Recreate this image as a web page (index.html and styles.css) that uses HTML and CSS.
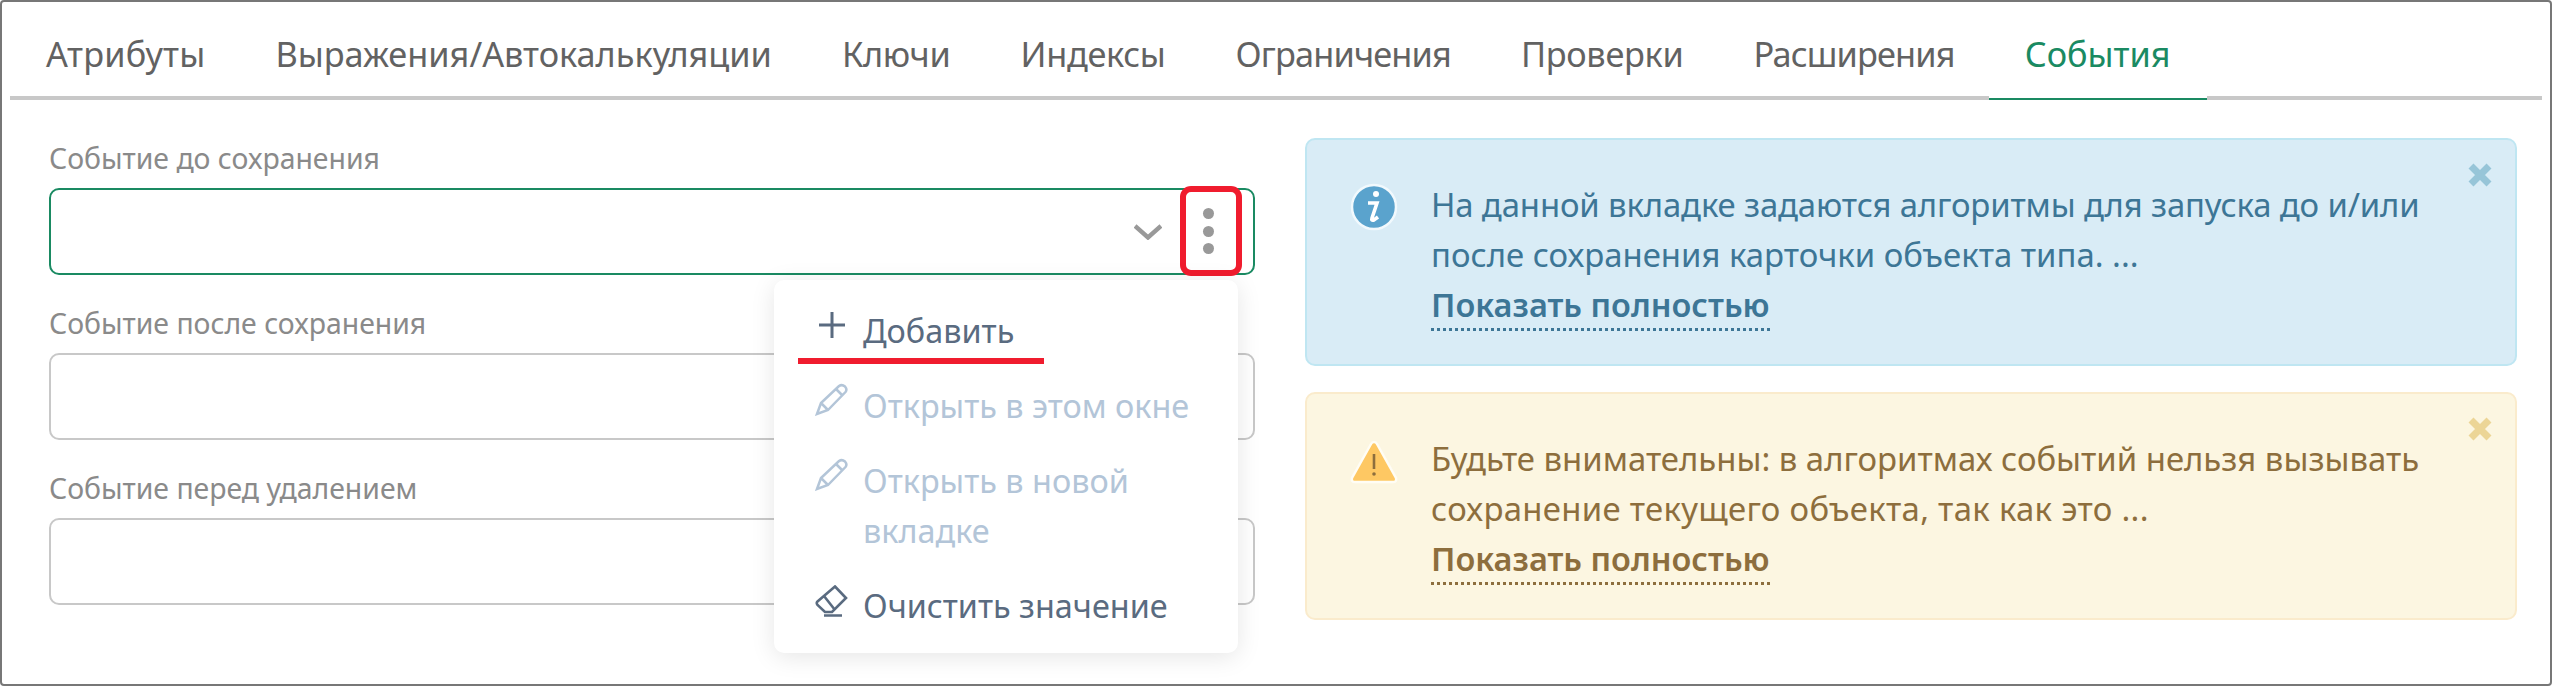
FILE: index.html

```html
<!DOCTYPE html>
<html lang="ru">
<head>
  <meta charset="UTF-8">
  <title>События</title>
  <link rel="stylesheet" href="styles.css">
</head>
<body>
  <div class="frame">
    <div class="tabs">
      <div class="tab wide">Атрибуты</div>
      <div class="tab">Выражения/Автокалькуляции</div>
      <div class="tab snug">Ключи</div>
      <div class="tab snug">Индексы</div>
      <div class="tab tight">Ограничения</div>
      <div class="tab snug">Проверки</div>
      <div class="tab tight">Расширения</div>
      <div class="tab active">События</div>
    </div>

    <div class="content">
      <div class="form">
        <div class="field">
          <div class="label">Событие до сохранения</div>
          <div class="input focused">
            <svg class="chevron" viewBox="0 0 28 16"><path d="M1 2 L14 13.5 L27 2" fill="none" stroke="#999" stroke-width="4.4"/></svg>
            <div class="dots"><span></span><span></span><span></span></div>
            <div class="red-box"></div>
          </div>
        </div>
        <div class="field">
          <div class="label">Событие после сохранения</div>
          <div class="input"></div>
        </div>
        <div class="field">
          <div class="label">Событие перед удалением</div>
          <div class="input"></div>
        </div>

        <div class="menu">
          <div class="menu-item">
            <svg class="menu-icon icon-plus" viewBox="0 0 26 26"><path d="M13 0 V26 M0 13 H26" fill="none" stroke="#5a6b80" stroke-width="3"/></svg>
            <span>Добавить</span>
          </div>
          <div class="red-line"></div>
          <div class="menu-item disabled">
            <svg class="menu-icon icon-pencil" viewBox="0 0 33 33"><path d="M2 31 L6 20 L24 3 Q27 1 30 3.5 Q32.5 6.5 30.5 9 L13 27 Z M6 20 L13 27 M21 6 L27.5 12.5" fill="none" stroke="#b3c5d8" stroke-width="2.5"/></svg>
            <span>Открыть в этом окне</span>
          </div>
          <div class="menu-item disabled">
            <svg class="menu-icon icon-pencil" viewBox="0 0 33 33"><path d="M2 31 L6 20 L24 3 Q27 1 30 3.5 Q32.5 6.5 30.5 9 L13 27 Z M6 20 L13 27 M21 6 L27.5 12.5" fill="none" stroke="#b3c5d8" stroke-width="2.5"/></svg>
            <span>Открыть в новой вкладке</span>
          </div>
          <div class="menu-item">
            <svg class="menu-icon icon-eraser" viewBox="0 0 33 32"><path d="M20 1.5 L31 13 L17 27 H10 L2.5 20 Q1 18 2.5 16.5 Z M9 11 L20 25 M9 30.5 H27" fill="none" stroke="#5a6b80" stroke-width="2.6"/></svg>
            <span>Очистить значение</span>
          </div>
        </div>
      </div>

      <div class="alerts">
        <div class="alert info">
          <svg class="alert-icon" viewBox="0 0 48 48">
            <circle cx="24" cy="24" r="22" fill="#5aa3cd" stroke="#f1f9fd" stroke-width="2.5"/>
            <circle cx="26" cy="11" r="3" fill="#fff"/>
            <path d="M18 20 H27 L22 35 Q21 38 24 37 L28 34" fill="none" stroke="#fff" stroke-width="3.6"/>
          </svg>
          <div class="alert-text">
            <div class="line-tight">На данной вкладке задаются алгоритмы для запуска до и/или</div>
            <div>после сохранения карточки объекта типа. ...</div>
            <span class="more">Показать полностью</span>
          </div>
          <svg class="alert-close" viewBox="0 0 26 24"><path d="M4 3 L22 21 M22 3 L4 21" fill="none" stroke="#97c5d8" stroke-width="7"/></svg>
        </div>
        <div class="alert warn">
          <svg class="alert-icon" viewBox="0 0 48 46">
            <path d="M24 3 Q26 3 27 5 L46 39 Q47 43 43 43 H5 Q1 43 2 39 L21 5 Q22 3 24 3 Z" fill="#fec863" stroke="#fffdf5" stroke-width="2.5"/>
            <path d="M24 15 V30" stroke="#8d6e3d" stroke-width="2.6"/>
            <circle cx="24" cy="35" r="1.8" fill="#8d6e3d"/>
          </svg>
          <div class="alert-text">
            <div>Будьте внимательны: в алгоритмах событий нельзя вызывать</div>
            <div class="line-wide">сохранение текущего объекта, так как это ...</div>
            <span class="more">Показать полностью</span>
          </div>
          <svg class="alert-close" viewBox="0 0 26 24"><path d="M4 3 L22 21 M22 3 L4 21" fill="none" stroke="#ecd596" stroke-width="7"/></svg>
        </div>
      </div>
    </div>
  </div>
</body>
</html>
```

FILE: styles.css

```css
* {
  box-sizing: border-box;
}
body {
  margin: 0;
  background: #fff;
  font-family: "Noto Sans", sans-serif;
}
.frame {
  width: 2552px;
  height: 686px;
  border: 2px solid #777;
  border-radius: 4px;
  padding: 0 8px;
  overflow: hidden;
}

/* tabs */
.tabs {
  display: flex;
  height: 98px;
  padding-left: 1px;
  border-bottom: 4px solid #c8c8c8;
}
.tab {
  position: relative;
  padding: 28px 35px 0;
  font-size: 34.3px;
  line-height: 48px;
  color: #626262;
}
.tab.wide {
  letter-spacing: 0.2px;
}
.tab.snug {
  letter-spacing: -0.3px;
}
.tab.tight {
  letter-spacing: -0.85px;
}
.tab.active {
  margin-left: -1px;
  padding: 28px 36px 0;
  color: #1a8a62;
}
.tab.active::after {
  content: "";
  position: absolute;
  left: 0;
  right: 0;
  bottom: -4px;
  height: 4px;
  background: #fff;
  border-bottom: 2px solid #1a8a62;
}

/* form */
.content {
  display: flex;
  padding: 38px 25px 0 39px;
  gap: 50px;
}
.form {
  position: relative;
  width: 1206px;
  flex: none;
  padding-top: 50px;
}
.field {
  margin-bottom: 78px;
  position: relative;
}
.label {
  position: absolute;
  left: 0;
  top: -50px;
  font-size: 28.4px;
  line-height: 40px;
  color: #8a8a8a;
}
.input {
  position: relative;
  height: 87px;
  border: 2px solid #c8c8c8;
  border-radius: 10px;
}
.input.focused {
  border-color: #1a8a62;
}
.chevron {
  position: absolute;
  left: 1083px;
  top: 34px;
  width: 28px;
  height: 16px;
}
.dots {
  position: absolute;
  left: 1152px;
  top: 18px;
  display: flex;
  flex-direction: column;
  gap: 6.5px;
}
.dots span {
  width: 11px;
  height: 11px;
  border-radius: 50%;
  background: #999;
}
.red-box {
  position: absolute;
  left: 1129px;
  top: -4px;
  width: 62px;
  height: 90px;
  border: 6px solid #f01c2e;
  border-radius: 11px;
}

/* menu */
.menu {
  position: absolute;
  left: 725px;
  top: 142px;
  width: 464px;
  height: 373px;
  padding: 25px 20px 0 45px;
  background: #fff;
  border-radius: 10px;
  box-shadow: 0 4px 24px rgba(0, 0, 0, 0.1);
}
.menu-item {
  display: flex;
  margin-bottom: 25px;
  font-size: 32.4px;
  line-height: 50px;
  color: #5a6b80;
}
.menu-item.disabled {
  color: #b3c5d8;
}
.menu-icon {
  flex: none;
  margin-right: 18px;
}
.icon-plus {
  width: 26px;
  height: 26px;
  margin-top: 7px;
}
.icon-pencil,
.icon-eraser {
  width: 33px;
  margin-left: -4px;
  margin-right: 15px;
}
.icon-pencil {
  height: 33px;
  margin-top: 3px;
}
.icon-eraser {
  height: 32px;
  margin-top: 5px;
}
.red-line {
  position: absolute;
  left: 24px;
  top: 78px;
  width: 246px;
  height: 6px;
  background: #f01c2e;
}

/* alerts */
.alerts {
  flex: 1;
  display: flex;
  flex-direction: column;
  gap: 26px;
}
.alert {
  position: relative;
  display: flex;
  height: 228px;
  border: 2px solid;
  border-radius: 10px;
  padding: 43px 0 0 43px;
  font-size: 32.9px;
  line-height: 50px;
}
.alert.info {
  background: #d9ecf6;
  border-color: #bfe6f2;
  color: #3d7696;
}
.alert.warn {
  background: #fcf6e1;
  border-color: #faebcc;
  color: #8d6e3d;
}
.alert-icon {
  flex: none;
  width: 48px;
  height: 48px;
  margin-right: 33px;
}
.alert.warn .alert-icon {
  margin-top: 1px;
}
.alert-text {
  margin-top: -3px;
}
.line-tight {
  letter-spacing: -0.14px;
}
.line-wide {
  letter-spacing: 0.3px;
}
.more {
  font-size: 32.5px;
  font-weight: 600;
  border-bottom: 3px dotted currentColor;
  display: inline-block;
  line-height: 41px;
  padding-bottom: 3px;
}
.alert-close {
  position: absolute;
  right: 22px;
  top: 23px;
  width: 26px;
  height: 24px;
}
```
